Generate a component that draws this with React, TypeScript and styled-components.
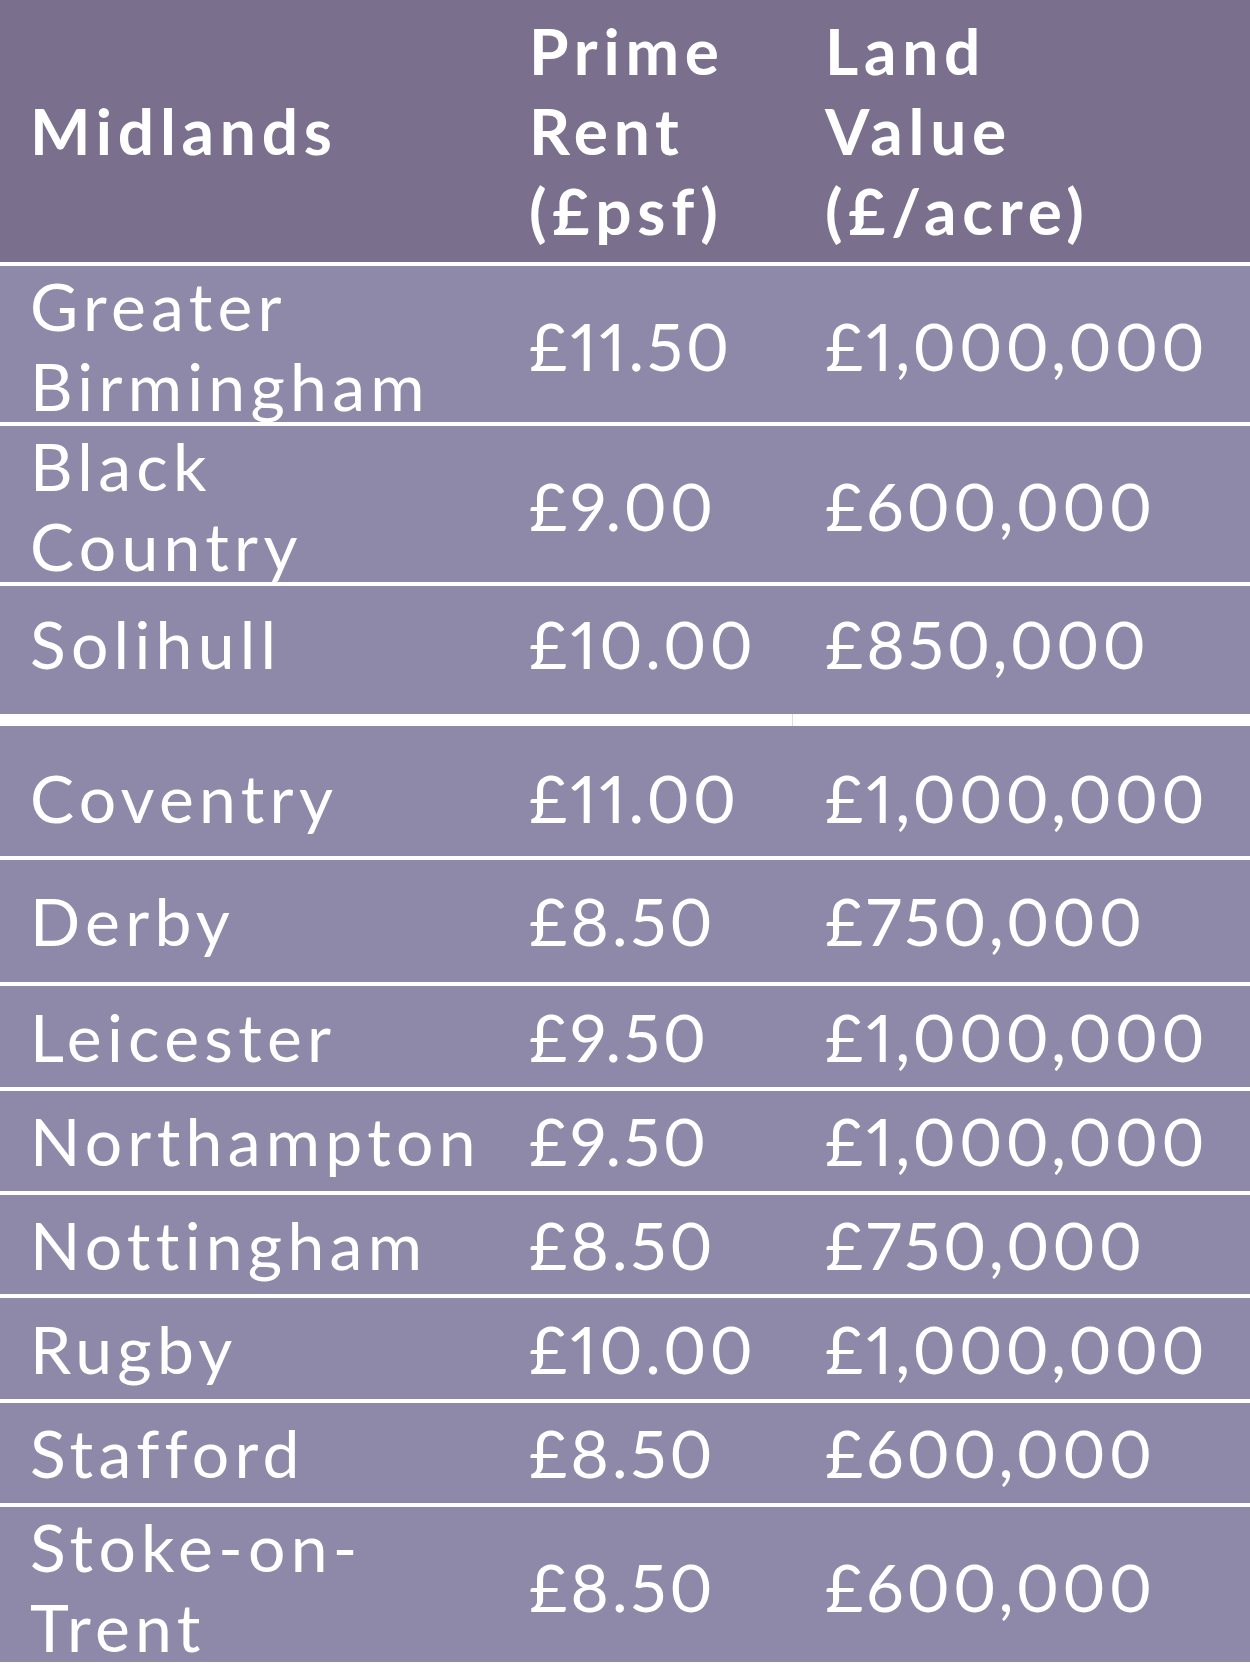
import styled, { createGlobalStyle } from "styled-components";

type Region = {
  name: string[];
  rent: string;
  land: string;
  height: number;
  sep?: number;
  shift?: number;
};

const regions: Region[] = [
  { name: ["Greater", "Birmingham"], rent: "£11.50", land: "£1,000,000", height: 160 },
  { name: ["Black", "Country"], rent: "£9.00", land: "£600,000", height: 160 },
  { name: ["Solihull"], rent: "£10.00", land: "£850,000", height: 128, sep: 0, shift: -6 },
];

const more: Region[] = [
  { name: ["Coventry"], rent: "£11.00", land: "£1,000,000", height: 134, shift: 7 },
  { name: ["Derby"], rent: "£8.50", land: "£750,000", height: 126 },
  { name: ["Leicester"], rent: "£9.50", land: "£1,000,000", height: 105 },
  { name: ["Northampton"], rent: "£9.50", land: "£1,000,000", height: 104 },
  { name: ["Nottingham"], rent: "£8.50", land: "£750,000", height: 103 },
  { name: ["Rugby"], rent: "£10.00", land: "£1,000,000", height: 105 },
  { name: ["Stafford"], rent: "£8.50", land: "£600,000", height: 104 },
  { name: ["Stoke-on-", "Trent"], rent: "£8.50", land: "£600,000", height: 155, sep: 0 },
];

const GlobalStyle = createGlobalStyle`
  body {
    margin: 0;
    background: #ffffff;
    font-family: Lato, "Liberation Sans", sans-serif;
  }
`;

const Table = styled.div`
  width: 1250px;
  display: flex;
  flex-direction: column;
  background: #ffffff;
  color: #ffffff;
`;

const Row = styled.div<{ $h: number; $sep?: number; $head?: boolean; $shift?: number }>`
  box-sizing: border-box;
  height: ${(p) => p.$h}px;
  display: grid;
  grid-template-columns: 497px 296px 457px;
  align-items: center;
  background: ${(p) => (p.$head ? "#7a708e" : "#8e89a8")};
  border-bottom: ${(p) => (p.$sep ?? 4)}px solid #ffffff;
  padding-top: ${(p) => Math.max(0, (p.$shift ?? 0) * 2)}px;
  padding-bottom: ${(p) => Math.max(0, -(p.$shift ?? 0) * 2)}px;
`;

const Cell = styled.div<{ $head?: boolean; $first?: boolean; $num?: boolean }>`
  padding: 0 20px 0 ${(p) => (p.$first ? 30 : 32)}px;
  font-size: ${(p) => (p.$head ? 64 : 66)}px;
  line-height: 80px;
  font-weight: ${(p) => (p.$head ? 700 : 400)};
  letter-spacing: ${(p) => (p.$head ? "0.09em" : p.$num ? "0.045em" : "0.08em")};
  font-variant-numeric: proportional-nums;
  white-space: nowrap;
`;

const Gap = styled.div`
  height: 12px;
  background: linear-gradient(
    to right,
    #ffffff 792px,
    #dcdcdc 792px,
    #dcdcdc 793px,
    #ffffff 793px
  );
`;

const RegionRow = ({ r }: { r: Region }) => (
  <Row $h={r.height} $sep={r.sep} $shift={r.shift}>
    <Cell $first>
      {r.name.map((n, i) => (
        <div key={i}>{n}</div>
      ))}
    </Cell>
    <Cell $num>{r.rent}</Cell>
    <Cell $num>{r.land}</Cell>
  </Row>
);

export default function App() {
  return (
    <>
      <GlobalStyle />
      <Table>
        <Row $h={266} $head>
          <Cell $head $first>Midlands</Cell>
          <Cell $head>
            <div>Prime</div>
            <div>Rent</div>
            <div>(£psf)</div>
          </Cell>
          <Cell $head>
            <div>Land</div>
            <div>Value</div>
            <div>(£/acre)</div>
          </Cell>
        </Row>
        {regions.map((r) => (
          <RegionRow key={r.name.join(" ")} r={r} />
        ))}
        <Gap />
        {more.map((r) => (
          <RegionRow key={r.name.join(" ")} r={r} />
        ))}
      </Table>
    </>
  );
}
